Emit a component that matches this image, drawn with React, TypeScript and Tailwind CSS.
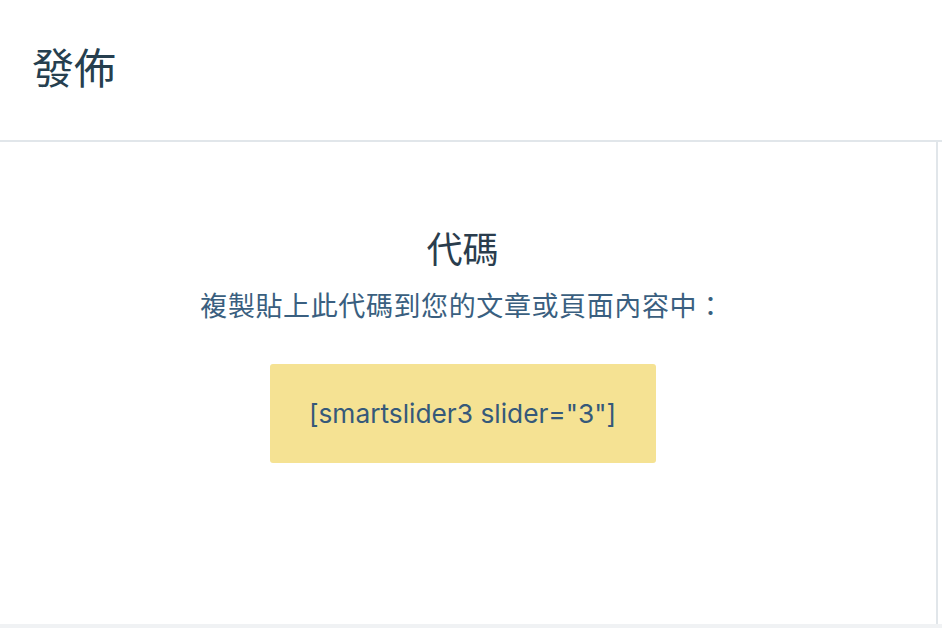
import React from 'react';

const cjk = { fontFamily: '"Noto Sans CJK TC", "Noto Sans", sans-serif' };

const App: React.FC = () => {
    return (
        <div className="w-[942px] h-[628px] bg-white flex flex-col overflow-hidden" style={cjk}>
            <header className="h-[142px] shrink-0 border-b-2 border-[#e1e6ea] flex items-center pl-[32px]">
                <h1 className="text-[42px] leading-none text-[#263f4f] pb-[8px]">發佈</h1>
            </header>
            <main className="flex-1 flex">
                <section className="w-[938px] border-r-2 border-[#e1e6ea] flex flex-col items-center pt-[83px] pr-[11px]">
                    <h2 className="text-[36px] leading-[44px] text-[#2a3d4d]">代碼</h2>
                    <p className="mt-[19px] text-[27px] leading-[34px] tracking-[0.6px] text-[#3a5f80]">
                        複製貼上此代碼到您的文章或頁面內容中：
                    </p>
                    <div className="mt-[42px] w-[386px] h-[99px] rounded-[3px] bg-[#f5e293] flex items-center justify-center">
                        <span className="text-[26.3px] text-[#35597a]" style={{ fontFamily: 'Inter, "Liberation Sans", sans-serif' }}>
                            [smartslider3 slider="3"]
                        </span>
                    </div>
                </section>
                <div className="flex-1" />
            </main>
            <footer className="h-[4px] shrink-0 bg-[#f0f2f4]" />
        </div>
    );
};

export default App;
